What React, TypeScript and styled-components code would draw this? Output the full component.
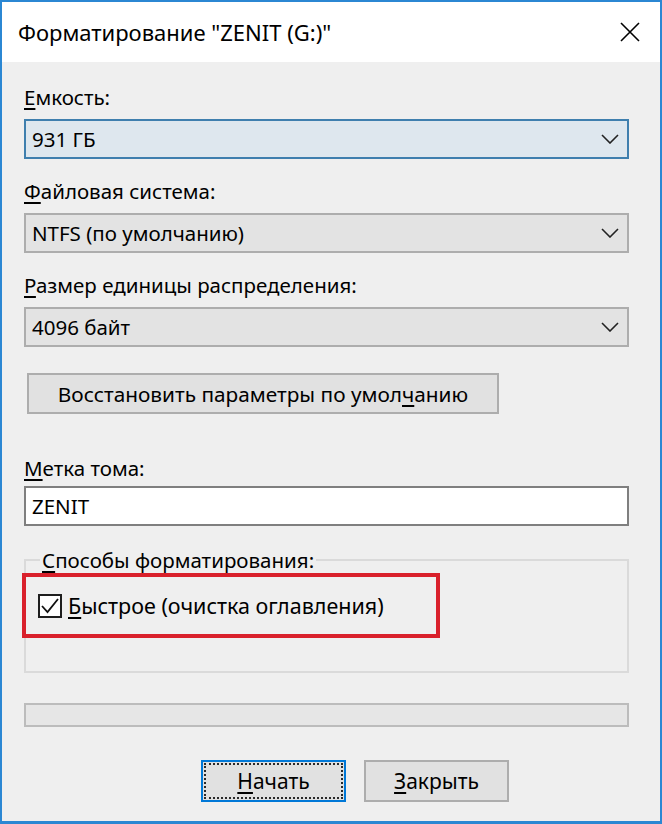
import styled, { createGlobalStyle } from 'styled-components';

const GlobalStyle = createGlobalStyle`
  html, body {
    margin: 0;
    padding: 0;
    background: #ffffff;
  }
  body {
    font-family: 'Noto Sans', 'Open Sans', sans-serif;
    color: #000;
  }
  * {
    box-sizing: border-box;
  }
`;

const Window = styled.div`
  width: 662px;
  height: 824px;
  border: 2px solid #2b87d3;
  border-bottom-width: 3px;
  background: #efefef;
  display: flex;
  flex-direction: column;
`;

const TitleBar = styled.div`
  height: 60px;
  background: #ffffff;
  display: flex;
  align-items: center;
  justify-content: space-between;
  padding: 0 20px 0 16px;
`;

const Title = styled.div`
  font-size: 22px;
`;

const CloseIcon = styled.svg`
  width: 20px;
  height: 20px;
`;

const Body = styled.div`
  display: flex;
  flex-direction: column;
  padding: 21px 31px 0 22px;
`;

const Label = styled.div<{ $gap?: number }>`
  font-size: 20.5px;
  line-height: 28px;
  margin-top: ${({ $gap }) => $gap ?? 0}px;
`;

const Key = styled.span`
  text-decoration: underline;
  text-decoration-thickness: 2px;
  text-underline-offset: 3px;
`;

const Combo = styled.div<{ $focused?: boolean; $gap?: number }>`
  height: 40px;
  margin-top: ${({ $gap }) => $gap ?? 8}px;
  display: flex;
  align-items: center;
  justify-content: space-between;
  padding: 0 8px 0 6px;
  font-size: 20.5px;
  background: ${({ $focused }) => ($focused ? '#dee7ee' : '#e3e3e3')};
  border: 2px solid ${({ $focused }) => ($focused ? '#3f7fae' : '#adadad')};
`;

const Chevron = styled.svg`
  width: 18px;
  height: 10px;
`;

const PushButton = styled.div<{ $gap?: number }>`
  width: 472px;
  height: 41px;
  margin: ${({ $gap }) => $gap ?? 0}px 0 0 3px;
  display: flex;
  align-items: center;
  justify-content: center;
  font-size: 20.8px;
  background: #e1e1e1;
  border: 2px solid #adadad;
`;

const TextBox = styled.div`
  height: 40px;
  margin-top: 4px;
  display: flex;
  align-items: center;
  padding: 0 6px;
  font-size: 20.5px;
  background: #ffffff;
  border: 2px solid #7f7f7f;
`;

const Group = styled.fieldset`
  margin: 20px 0 0 0;
  padding: 0;
  border: 2px solid #dadada;
  min-width: 0;
`;

const Legend = styled.legend`
  margin-left: 14px;
  padding: 0 2px;
  font-size: 20.5px;
  line-height: 28px;
`;

const Highlight = styled.div`
  width: 418px;
  height: 65px;
  margin: -1px 0 33px -4px;
  border: 4px solid #d9202b;
  display: flex;
  align-items: center;
  gap: 6px;
  padding-left: 12px;
  font-size: 21.5px;
`;

const CheckBox = styled.div`
  width: 24px;
  height: 24px;
  border: 2px solid #1e1e1e;
  background: #ffffff;
  display: flex;
  align-items: center;
  justify-content: center;
`;

const Progress = styled.div`
  height: 24px;
  margin-top: 30px;
  background: #e6e6e6;
  border: 2px solid #bcbcbc;
`;

const Actions = styled.div`
  display: flex;
  justify-content: flex-end;
  gap: 18px;
  margin-top: 33px;
  padding-right: 120px;
`;

const DialogButton = styled.div<{ $default?: boolean }>`
  width: 145px;
  height: 42px;
  display: flex;
  align-items: center;
  justify-content: center;
  font-size: 21px;
  background: #e1e1e1;
  border: 2px solid ${({ $default }) => ($default ? '#0078d7' : '#adadad')};
  outline: ${({ $default }) => ($default ? '2px dotted #2a2a2a' : 'none')};
  outline-offset: -5px;
`;

const Arrow = () => (
  <Chevron viewBox="0 0 18 10">
    <path d="M1 1 L9 9 L17 1" fill="none" stroke="#222" strokeWidth="1.6" />
  </Chevron>
);

export default function App() {
  return (
    <Window>
      <GlobalStyle />
      <TitleBar>
        <Title>Форматирование "ZENIT (G:)"</Title>
        <CloseIcon viewBox="0 0 20 20">
          <path d="M1 1 L19 19 M19 1 L1 19" stroke="#000" strokeWidth="1.6" />
        </CloseIcon>
      </TitleBar>
      <Body>
        <Label>
          <Key>Е</Key>мкость:
        </Label>
        <Combo $focused>
          <span>931 ГБ</span>
          <Arrow />
        </Combo>
        <Label $gap={18}>
          <Key>Ф</Key>айловая система:
        </Label>
        <Combo>
          <span>NTFS (по умолчанию)</span>
          <Arrow />
        </Combo>
        <Label $gap={18}>
          <Key>Р</Key>азмер единицы распределения:
        </Label>
        <Combo>
          <span>4096 байт</span>
          <Arrow />
        </Combo>
        <PushButton $gap={26}>
          <span>
            Восстановить параметры по умол<Key>ч</Key>анию
          </span>
        </PushButton>
        <Label $gap={40}>
          <Key>М</Key>етка тома:
        </Label>
        <TextBox>ZENIT</TextBox>
        <Group>
          <Legend>
            <Key>С</Key>пособы форматирования:
          </Legend>
          <Highlight>
            <CheckBox>
              <svg width="18" height="16" viewBox="0 0 18 16">
                <path d="M1 8 L6.5 14 L17 1" fill="none" stroke="#111" strokeWidth="1.8" />
              </svg>
            </CheckBox>
            <span>
              <Key>Б</Key>ыстрое (очистка оглавления)
            </span>
          </Highlight>
        </Group>
        <Progress />
        <Actions>
          <DialogButton $default>
            <span>
              <Key>Н</Key>ачать
            </span>
          </DialogButton>
          <DialogButton>
            <span>
              <Key>З</Key>акрыть
            </span>
          </DialogButton>
        </Actions>
      </Body>
    </Window>
  );
}
